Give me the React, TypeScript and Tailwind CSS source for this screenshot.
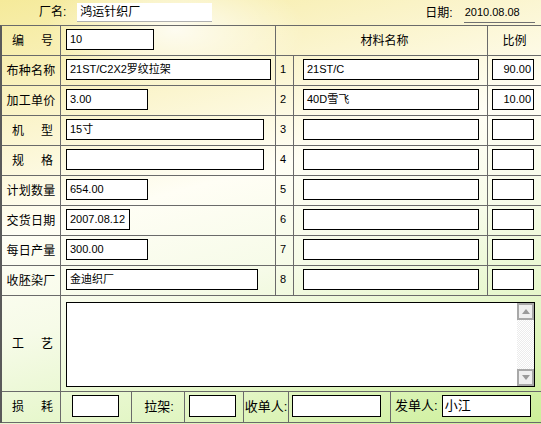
import React from 'react';

type Row = {
  label: string;
  spread?: boolean;
  value: string;
  w: string;
  mat: string;
  ratio: string;
};

const rows: Row[] = [
  { label: '布种名称', value: '21ST/C2X2罗纹拉架', w: 'w-[205px]', mat: '21ST/C', ratio: '90.00' },
  { label: '加工单价', value: '3.00', w: 'w-[82px]', mat: '40D雪飞', ratio: '10.00' },
  { label: '机型', spread: true, value: '15寸', w: 'w-[198px]', mat: '', ratio: '' },
  { label: '规格', spread: true, value: '', w: 'w-[198px]', mat: '', ratio: '' },
  { label: '计划数量', value: '654.00', w: 'w-[82px]', mat: '', ratio: '' },
  { label: '交货日期', value: '2007.08.12', w: 'w-[64px]', mat: '', ratio: '' },
  { label: '每日产量', value: '300.00', w: 'w-[82px]', mat: '', ratio: '' },
  { label: '收胚染厂', value: '金迪织厂', w: 'w-[192px]', mat: '', ratio: '' },
];

function Label({ text, spread }: { text: string; spread?: boolean }) {
  if (spread) {
    return (
      <div className="w-[59px] shrink-0 border-r border-[#6a6a6a] flex items-center justify-between pl-[10px] pr-[7px] text-[12px]">
        <span>{text[0]}</span>
        <span>{text[1]}</span>
      </div>
    );
  }
  return (
    <div className="w-[59px] shrink-0 border-r border-[#6a6a6a] flex items-center justify-center text-[12px] tracking-[0.3px]">
      {text}
    </div>
  );
}

function Field({ w, value, right }: { w: string; value: string; right?: boolean }) {
  return (
    <div
      className={`${w} h-[21px] border border-black bg-white flex items-center text-[11px] leading-none whitespace-nowrap overflow-hidden ${
        right ? 'justify-end pr-[2px]' : 'pl-[3px]'
      }`}
    >
      {value}
    </div>
  );
}

function ScrollBtn({ up }: { up?: boolean }) {
  return (
    <div className="w-[17px] h-[17px] border-2 border-[#a8a8a8] bg-[#efefef] flex items-center justify-center">
      <svg width="8" height="5" viewBox="0 0 8 5">
        {up ? <polygon points="4,0 8,5 0,5" fill="#9a9a9a" /> : <polygon points="0,0 8,0 4,5" fill="#9a9a9a" />}
      </svg>
    </div>
  );
}

export default function App() {
  return (
    <div className="w-[541px] h-[424px] overflow-hidden text-black font-['Liberation_Sans','Noto_Sans_CJK_SC',sans-serif] bg-[image:radial-gradient(ellipse_130px_60px_at_175px_30px,rgba(255,255,255,0.8),rgba(255,255,255,0)_100%),linear-gradient(165deg,#f5ea9a_0%,#faf3c6_20%,#fffef5_42%,#f6fbe8_60%,#e3f6c6_80%,#ccef98_100%)]">
      {/* header */}
      <div className="h-[25px] flex items-start">
        <span className="ml-[39px] mt-[5px] text-[12px] leading-[14px]">厂名:</span>
        <div className="ml-[11px] mt-[3px] w-[135px] h-[19px] bg-white border-b border-[#b0b0b0] flex items-center pl-[3px] text-[12px]">
          鸿运针织厂
        </div>
        <span className="ml-[213px] mt-[6px] text-[12px] leading-[14px]">日期:</span>
        <div className="ml-[11px] mt-[3px] w-[71px] h-[20px] border-b border-[#707070] flex items-center pl-[1px] text-[11px]">
          2010.08.08
        </div>
      </div>

      {/* table */}
      <div className="border-t border-l-2 border-[#6a6a6a] border-l-[#5a5a5a]">
        <div className="flex h-[30px] border-b border-[#6a6a6a]">
          <Label text="编号" spread />
          <div className="w-[215px] shrink-0 border-r border-[#6a6a6a] pl-[5px] pt-[3px]">
            <Field w="w-[88px]" value="10" />
          </div>
          <div className="w-[212px] shrink-0 border-r border-[#6a6a6a] flex items-center justify-center text-[12px] pl-[6px]">
            材料名称
          </div>
          <div className="flex-1 flex items-center justify-center text-[12px]">比例</div>
        </div>

        {rows.map((r, i) => (
          <div key={i} className="flex h-[30px] border-b border-[#6a6a6a]">
            <Label text={r.label} spread={r.spread} />
            <div className="w-[215px] shrink-0 border-r border-[#6a6a6a] pl-[5px] pt-[3px]">
              <Field w={r.w} value={r.value} />
            </div>
            <div className="w-[18px] shrink-0 border-r border-[#6a6a6a] flex items-center pl-[4px] pb-[3px] text-[11px]">
              {i + 1}
            </div>
            <div className="w-[194px] shrink-0 border-r border-[#6a6a6a] pl-[9px] pt-[3px]">
              <Field w="w-[176px]" value={r.mat} />
            </div>
            <div className="flex-1 pl-[4px] pt-[3px]">
              <Field w="w-[42px]" value={r.ratio} right />
            </div>
          </div>
        ))}

        {/* 工艺 */}
        <div className="flex h-[96px] border-b border-[#6a6a6a]">
          <Label text="工艺" spread />
          <div className="flex-1 pl-[5px] pt-[6px]">
            <div className="w-[469px] h-[85px] border border-black bg-white flex justify-end">
              <div className="w-[17px] flex flex-col justify-between bg-[image:repeating-conic-gradient(#ececec_0_25%,#ffffff_0_50%)] bg-[length:2px_2px]">
                <ScrollBtn up />
                <ScrollBtn />
              </div>
            </div>
          </div>
        </div>

        {/* bottom */}
        <div className="flex h-[31px] border-b border-[#6a6a6a] text-[13px]">
          <Label text="损耗" spread />
          <div className="w-[71px] shrink-0 border-r border-[#6a6a6a] pl-[11px] pt-[3px]">
            <div className="w-[47px] h-[22px] border border-black bg-white" />
          </div>
          <div className="w-[53px] shrink-0 border-r border-[#6a6a6a] flex items-center justify-center pl-[2px]">
            拉架:
          </div>
          <div className="w-[59px] shrink-0 border-r border-[#6a6a6a] pl-[4px] pt-[3px]">
            <div className="w-[47px] h-[22px] border border-black bg-white" />
          </div>
          <div className="w-[45px] shrink-0 border-r border-[#6a6a6a] flex items-center justify-center">
            收单人:
          </div>
          <div className="w-[102px] shrink-0 border-r border-[#6a6a6a] pl-[3px] pt-[3px]">
            <div className="w-[89px] h-[22px] border border-black bg-white" />
          </div>
          <div className="flex-1 flex items-start pl-[4px]">
            <span className="mt-[7px] leading-[14px]">发单人:</span>
            <div className="ml-[4px] mt-[3px] w-[89px] h-[22px] border border-black bg-white flex items-center pl-[2px] text-[13px]">
              小江
            </div>
          </div>
        </div>
      </div>
    </div>
  );
}
